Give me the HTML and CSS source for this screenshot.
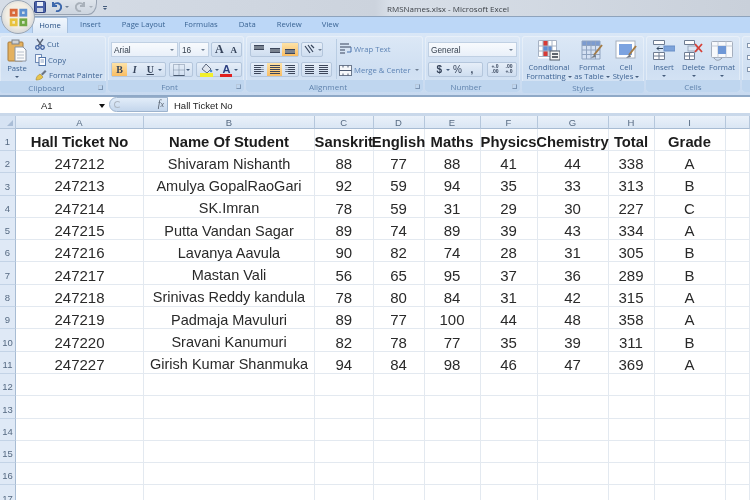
FILE: index.html
```html
<!DOCTYPE html>
<html lang="en">
<head>
<meta charset="utf-8">
<title>RMSNames.xlsx - Microsoft Excel</title>
<link rel="stylesheet" href="styles.css">
</head>
<body>
<div class="office">
  <svg width="21" height="21" viewBox="0 0 24 24"><rect x="2" y="2" width="9" height="9" fill="#d9683a"/><rect x="13" y="2" width="9" height="9" fill="#5d8fd0"/><rect x="2" y="13" width="9" height="9" fill="#e8c23d"/><rect x="13" y="13" width="9" height="9" fill="#6fa844"/><path d="M5 5h3v3H5zM16 16h3v3h-3zM5 16h3v3H5zM16 5h3v3h-3z" fill="#f4f4ee" opacity=".75"/></svg>
</div>
<header class="title">
  <div class="qat">
    <svg width="12" height="12" viewBox="0 0 12 12"><rect x=".5" y=".5" width="11" height="11" rx="1" fill="#4a62a8" stroke="#2c3f80"/><rect x="3" y="1" width="6" height="4" fill="#e9eef8"/><rect x="3" y="7" width="6" height="4" fill="#c9d2e4"/></svg>
    <svg class="undo" width="11" height="11" viewBox="0 0 11 11"><path d="M2 1v4h4M2.300 5A4 4 0 1 1 5 10" fill="none" stroke="#3d68ac" stroke-width="2"/></svg>
    <i class="caret"></i>
    <svg class="redo" width="11" height="11" viewBox="0 0 11 11"><path d="M9 1v4H5M8.700 5A4 4 0 1 0 6 10" fill="none" stroke="#a9b1ba" stroke-width="2"/></svg>
    <i class="caret muted"></i>
  </div>
  <span class="more"><b></b><i class="caret dark"></i></span>
  <span class="doc">RMSNames.xlsx - Microsoft Excel</span>
</header>
<nav class="tabs">
  <span class="tab active">Home</span><span class="tab t1">Insert</span><span class="tab t2">Page Layout</span><span class="tab t3">Formulas</span><span class="tab t4">Data</span><span class="tab t5">Review</span><span class="tab t6">View</span>
</nav>
<section class="ribbon">
  <div class="group g-clip">
    <div class="body">
      <div class="big paste">
        <svg width="20" height="23" viewBox="0 0 20 23"><rect x="1" y="3" width="15" height="19" rx="1" fill="#e4b15f" stroke="#a97c3c"/><rect x="5" y="1" width="7" height="4" fill="#cfd2d6" stroke="#7d8288"/><path d="M8 8h8l3 3v11H8z" fill="#fbfbfb" stroke="#8a94a3"/><path d="M10 13h7M10 16h7M10 19h7" stroke="#b7c0cc"/></svg>
        <span>Paste</span><i class="caret dark"></i>
      </div>
      <div class="stack">
        <div class="line"><svg width="10" height="12" viewBox="0 0 10 12"><path d="M2 1l5 7M8 1L3 8" stroke="#5a6478" stroke-width="1.300" fill="none"/><circle cx="2.500" cy="9.500" r="1.800" fill="none" stroke="#3f5f9e" stroke-width="1.300"/><circle cx="7.500" cy="9.500" r="1.800" fill="none" stroke="#3f5f9e" stroke-width="1.300"/></svg><span>Cut</span></div>
        <div class="line"><svg width="11" height="12" viewBox="0 0 11 12"><rect x=".5" y=".5" width="6" height="8" fill="#f7f9fc" stroke="#6f8bb5"/><rect x="4" y="3.500" width="6.500" height="8" fill="#fff" stroke="#4f73a8"/><path d="M5.500 6h3.500M5.500 8h3.500" stroke="#8ea5c6"/></svg><span>Copy</span></div>
        <div class="line"><svg width="12" height="12" viewBox="0 0 12 12"><path d="M1 11c0-3 2-5 4-6l3 3c-1 2-4 3-7 3z" fill="#e8c44c" stroke="#a98a2c" stroke-width=".6"/><path d="M6 5l4-4 1.500 1.500-4 4z" fill="#6a7484"/></svg><span>Format Painter</span></div>
      </div>
    </div>
    <div class="label has">Clipboard<i class="launch"></i></div>
  </div>

  <div class="group g-font">
    <div class="body rows">
      <div class="ctl-row">
        <span class="select s-font">Arial<i class="caret"></i></span>
        <span class="select s-size">16<i class="caret"></i></span>
        <span class="btns fs"><b class="grow">A</b><b class="shrink">A</b></span>
      </div>
      <div class="ctl-row">
        <span class="btns biu"><b class="on bold">B</b><b class="ital">I</b><b class="under">U</b><i class="caret dark"></i></span>
        <span class="btns bord"><svg width="12" height="12" viewBox="0 0 12 12"><path d="M.5.5h11v11H.5zM6 .5v11M.5 6h11" fill="none" stroke="#7a8aa0" stroke-dasharray="1 1"/><path d="M.5 11.500h11" stroke="#4a5a70"/></svg><i class="caret dark"></i></span>
        <span class="btns color"><svg width="13" height="14" viewBox="0 0 13 14"><path d="M6 1l5 5-4 4-5-4z" fill="#dfe5ee" stroke="#5e6a80"/><circle cx="11" cy="8" r="1.300" fill="#4d8ac9"/><rect y="10" width="13" height="4" fill="#f1ef2c"/></svg><i class="caret dark"></i><span class="tcolor">A</span><i class="caret dark"></i></span>
      </div>
    </div>
    <div class="label has">Font<i class="launch"></i></div>
  </div>

  <div class="group g-align">
    <div class="body">
      <div class="rows a-left">
        <div class="ctl-row">
          <span class="btns w48"><b><i class="bars top"></i></b><b><i class="bars mid"></i></b><b class="on"><i class="bars bot"></i></b></span>
          <span class="btns w23"><svg width="14" height="11" viewBox="0 0 14 11"><path d="M1 2l5 7M4 1l5 7M7 1l3 3" stroke="#35435a" stroke-width="1.200" fill="none"/></svg><i class="caret"></i></span>
        </div>
        <div class="ctl-row">
          <span class="btns w48"><b><i class="lines left"></i></b><b class="on"><i class="lines center"></i></b><b><i class="lines right"></i></b></span>
          <span class="btns w32"><b><i class="lines center indent"></i></b><b><i class="lines center indent"></i></b></span>
        </div>
      </div>
      <div class="stack wide">
        <div class="line tall"><svg width="13" height="12" viewBox="0 0 13 12"><path d="M1 1h9M1 4h11M1 7h5M1 10h5" stroke="#6d7a8e" stroke-width="1.500"/><path d="M12 4v5H8" fill="none" stroke="#4a73ad"/></svg><span>Wrap Text</span></div>
        <div class="line tall"><svg width="13" height="11" viewBox="0 0 13 11"><rect x=".5" y=".5" width="12" height="10" fill="#f5f7fa" stroke="#6d7a8e"/><path d="M.5 5.500h12M4 .5v2M9 .5v2M4 8.500v2M9 8.500v2" stroke="#4c5a72"/></svg><span>Merge &amp; Center</span><i class="caret"></i></div>
      </div>
    </div>
    <div class="label has">Alignment<i class="launch"></i></div>
  </div>

  <div class="group g-num">
    <div class="body rows">
      <div class="ctl-row"><span class="select s-num">General<i class="caret"></i></span></div>
      <div class="ctl-row">
        <span class="btns w55"><b class="sym">$</b><i class="caret dark"></i><b class="sym pct">%</b><b class="sym">,</b></span>
        <span class="btns w30"><b class="dec">+.0<br>.00</b><b class="dec">.00<br>+.0</b></span>
      </div>
    </div>
    <div class="label has">Number<i class="launch"></i></div>
  </div>

  <div class="group g-style">
    <div class="body icons">
      <div class="big w-cond">
        <svg width="22" height="21" viewBox="0 0 22 21"><path d="M0 .5h19v18H0z" fill="#fff"/><rect y="0" width="6" height="6" fill="#f4f7fb"/><rect x="5" y="1" width="5" height="5" fill="#d83a35"/><rect x="5" y="6" width="9" height="5" fill="#5f8ed4"/><rect x="5" y="11" width="5" height="5" fill="#d83a35"/><path d="M.5.500h18v16H.5zM.5 6h18M.5 11h18M5 .5v16M10 .5v16M14 .5v16" fill="none" stroke="#a6b2c4"/><rect x="12" y="11" width="10" height="9" fill="#f4f4f4" stroke="#4f5a6b"/><path d="M14 14h6M14 17h6" stroke="#2d3440" stroke-width="1.500"/></svg>
        <span>Conditional</span><span>Formatting <i class="caret dark"></i></span>
      </div>
      <div class="big w-fmt">
        <svg width="22" height="21" viewBox="0 0 22 21"><rect x="1" y="1" width="18" height="18" fill="#d5e1f3"/><rect x="1" y="1" width="18" height="4" fill="#7c9bd0"/><path d="M1 1h18v18H1zM1 5.500h18M1 10h18M1 14.500h18M5.500 1v18M10 1v18M14.500 1v18" fill="none" stroke="#8fa3c0"/><path d="M21 5L13 15" stroke="#a47b45" stroke-width="2"/><path d="M14 14l-4 4 5-1z" fill="#737b85"/></svg>
        <span>Format</span><span>as Table <i class="caret dark"></i></span>
      </div>
      <div class="big w-cell">
        <svg width="22" height="21" viewBox="0 0 22 21"><rect x="1" y="1" width="19" height="17" fill="#fff" stroke="#a5afbe"/><rect x="4" y="4" width="13" height="11" fill="#7ca3e0"/><path d="M21 6l-7 9" stroke="#a47b45" stroke-width="2"/><path d="M15 14l-4 4 5-1z" fill="#737b85"/></svg>
        <span>Cell</span><span>Styles <i class="caret dark"></i></span>
      </div>
    </div>
    <div class="label">Styles</div>
  </div>

  <div class="group g-cell">
    <div class="body icons">
      <div class="big w-ins">
        <svg width="22" height="21" viewBox="0 0 22 21"><path d="M.5.500h11v4H.5zM.5 12.500h11v7H.5zM6 12.500v7M.5 16h11" fill="#fdfdfe" stroke="#6e7c92"/><rect x="11" y="6" width="11" height="5" fill="#7da3da" stroke="#6a8fc7"/><path d="M10 8.500H4M6 6.500l-2 2 2 2" fill="none" stroke="#33475f"/></svg>
        <span>Insert</span><i class="caret dark"></i>
      </div>
      <div class="big w-del">
        <svg width="20" height="21" viewBox="0 0 20 21"><path d="M.5.500h10v4H.5zM.5 12.500h10v7H.5zM5.500 12.500v7M.5 16h10" fill="#fdfdfe" stroke="#6e7c92"/><rect x="4" y="6" width="9" height="5" fill="#dce6f4" stroke="#9aa9bd"/><path d="M11 4l7 8M18 4l-7 8" stroke="#d63f36" stroke-width="1.800"/></svg>
        <span>Delete</span><i class="caret dark"></i>
      </div>
      <div class="big w-for">
        <svg width="22" height="21" viewBox="0 0 22 21"><rect x=".5" y="1.500" width="21" height="16" rx="1" fill="#f7f9fc" stroke="#a4aebd"/><path d="M7 1.500v16M15 1.500v16M.5 6h21" stroke="#c3cbd6"/><rect x="7" y="6" width="8" height="8" fill="#6e97d6"/><path d="M3 18c2 3 5 3 8 0" fill="none" stroke="#8d98a8"/></svg>
        <span>Format</span><i class="caret dark"></i>
      </div>
    </div>
    <div class="label">Cells</div>
  </div>

  <div class="group g-edit">
    <div class="body edit-marks"><i></i><i></i><i></i></div>
    <div class="label"></div>
  </div>
</section>
<div class="fbar">
  <div class="namebox">A1<i class="caret black"></i></div>
  <div class="pill"><i class="knob"></i><em>f<small>x</small></em></div>
  <div class="formula">Hall Ticket No</div>
</div>
<main class="sheet">
  <div class="corner"><i></i></div><div class="ch">A</div><div class="ch">B</div><div class="ch">C</div><div class="ch">D</div><div class="ch">E</div><div class="ch">F</div><div class="ch">G</div><div class="ch">H</div><div class="ch">I</div><div class="ch"></div>
  <div class="rh">1</div><div class="c b">Hall Ticket No</div><div class="c b">Name Of Student</div><div class="c b">Sanskrit</div><div class="c b">English</div><div class="c b">Maths</div><div class="c b">Physics</div><div class="c b">Chemistry</div><div class="c b">Total</div><div class="c b">Grade</div><div class="c"></div>
  <div class="rh">2</div><div class="c">247212</div><div class="c n">Shivaram Nishanth</div><div class="c">88</div><div class="c">77</div><div class="c">88</div><div class="c">41</div><div class="c">44</div><div class="c">338</div><div class="c">A</div><div class="c"></div>
  <div class="rh">3</div><div class="c">247213</div><div class="c n">Amulya GopalRaoGari</div><div class="c">92</div><div class="c">59</div><div class="c">94</div><div class="c">35</div><div class="c">33</div><div class="c">313</div><div class="c">B</div><div class="c"></div>
  <div class="rh">4</div><div class="c">247214</div><div class="c n">SK.Imran</div><div class="c">78</div><div class="c">59</div><div class="c">31</div><div class="c">29</div><div class="c">30</div><div class="c">227</div><div class="c">C</div><div class="c"></div>
  <div class="rh">5</div><div class="c">247215</div><div class="c n">Putta Vandan Sagar</div><div class="c">89</div><div class="c">74</div><div class="c">89</div><div class="c">39</div><div class="c">43</div><div class="c">334</div><div class="c">A</div><div class="c"></div>
  <div class="rh">6</div><div class="c">247216</div><div class="c n">Lavanya Aavula</div><div class="c">90</div><div class="c">82</div><div class="c">74</div><div class="c">28</div><div class="c">31</div><div class="c">305</div><div class="c">B</div><div class="c"></div>
  <div class="rh">7</div><div class="c">247217</div><div class="c n">Mastan Vali</div><div class="c">56</div><div class="c">65</div><div class="c">95</div><div class="c">37</div><div class="c">36</div><div class="c">289</div><div class="c">B</div><div class="c"></div>
  <div class="rh">8</div><div class="c">247218</div><div class="c n">Srinivas Reddy kandula</div><div class="c">78</div><div class="c">80</div><div class="c">84</div><div class="c">31</div><div class="c">42</div><div class="c">315</div><div class="c">A</div><div class="c"></div>
  <div class="rh">9</div><div class="c">247219</div><div class="c n">Padmaja Mavuluri</div><div class="c">89</div><div class="c">77</div><div class="c">100</div><div class="c">44</div><div class="c">48</div><div class="c">358</div><div class="c">A</div><div class="c"></div>
  <div class="rh">10</div><div class="c">247220</div><div class="c n">Sravani Kanumuri</div><div class="c">82</div><div class="c">78</div><div class="c">77</div><div class="c">35</div><div class="c">39</div><div class="c">311</div><div class="c">B</div><div class="c"></div>
  <div class="rh">11</div><div class="c">247227</div><div class="c n">Girish Kumar Shanmuka</div><div class="c">94</div><div class="c">84</div><div class="c">98</div><div class="c">46</div><div class="c">47</div><div class="c">369</div><div class="c">A</div><div class="c"></div>
  <div class="rh">12</div><div class="c"></div><div class="c"></div><div class="c"></div><div class="c"></div><div class="c"></div><div class="c"></div><div class="c"></div><div class="c"></div><div class="c"></div><div class="c"></div>
  <div class="rh">13</div><div class="c"></div><div class="c"></div><div class="c"></div><div class="c"></div><div class="c"></div><div class="c"></div><div class="c"></div><div class="c"></div><div class="c"></div><div class="c"></div>
  <div class="rh">14</div><div class="c"></div><div class="c"></div><div class="c"></div><div class="c"></div><div class="c"></div><div class="c"></div><div class="c"></div><div class="c"></div><div class="c"></div><div class="c"></div>
  <div class="rh">15</div><div class="c"></div><div class="c"></div><div class="c"></div><div class="c"></div><div class="c"></div><div class="c"></div><div class="c"></div><div class="c"></div><div class="c"></div><div class="c"></div>
  <div class="rh">16</div><div class="c"></div><div class="c"></div><div class="c"></div><div class="c"></div><div class="c"></div><div class="c"></div><div class="c"></div><div class="c"></div><div class="c"></div><div class="c"></div>
  <div class="rh">17</div><div class="c"></div><div class="c"></div><div class="c"></div><div class="c"></div><div class="c"></div><div class="c"></div><div class="c"></div><div class="c"></div><div class="c"></div><div class="c"></div>
</main>
</body>
</html>
```
FILE: styles.css
```css
* { box-sizing: border-box; }
html, body { margin: 0; height: 500px; overflow: hidden; background: #fff; }
body { width: 750px; position: relative; font-family: "Open Sans", "Noto Sans", sans-serif; font-size: 7.700px; color: #2f5688; filter: blur(.3px); }
i { font-style: normal; display: block; }
svg { display: block; flex: none; }

.caret { width: 0; height: 0; border: 2px solid transparent; border-top: 2.500px solid #6f7f93; border-bottom: 0; display: inline-block; flex: none; vertical-align: middle; }
.caret.dark { border-top-color: #445c7c; }
.caret.muted { border-top-color: #a8b0ba; }
.caret.black { border: 3px solid transparent; border-top: 4px solid #111; border-bottom: 0; }

.office { position: absolute; left: 1px; top: 0; width: 34px; height: 34px; border-radius: 50%; z-index: 3; display: flex; align-items: center; justify-content: center; background: radial-gradient(circle at 50% 45%, #f3eee4 0 48%, #d6d8da 74%, #aab4bf 100%); border: 1px solid #9ba6b4; }

.title { height: 17px; display: flex; align-items: center; background: linear-gradient(90deg, #d6dde7 0, #ccd3dd 50%, #d8dfe8 52%, #c9d0da 100%); border-bottom: 1px solid #8ea3bc; padding-left: 30px; }
.qat { width: 67px; height: 16px; margin-top: -2px; padding-left: 4px; display: flex; align-items: center; gap: 3px; background: linear-gradient(#dfe5ec, #cdd5df); border: 1px solid #98a3b2; border-top: 0; border-left: 0; border-radius: 0 0 9px 0 / 0 0 12px 0; }
.qat .undo { margin-left: 2px; }
.qat .redo { margin-left: 3px; }
.more { margin-left: 5px; width: 5px; display: flex; flex-direction: column; align-items: center; gap: 1px; }
.more b { width: 4px; height: 1px; background: #445c7c; }
.doc { margin-left: 280px; font-size: 8px; color: #3d4248; white-space: nowrap; }

.tabs { height: 16px; display: flex; background: #bcd7f7; padding-left: 32px; align-items: flex-end; }
.tab { height: 16px; line-height: 15px; color: #3a6494; white-space: nowrap; }
.tab.active { width: 36px; text-align: center; background: linear-gradient(#f0f6fd, #dbe8f7); border: 1px solid #a6c0de; border-bottom: 0; border-radius: 2px 2px 0 0; color: #264f83; }
.t1 { margin-left: 12px; }
.t2 { margin-left: 21px; }
.t3 { margin-left: 19px; }
.t4 { margin-left: 21px; }
.t5 { margin-left: 21px; }
.t6 { margin-left: 20px; }

.ribbon { height: 64px; display: flex; gap: 2px; padding: 3px 0; background: linear-gradient(#d9e7f7, #c8daf0); border-bottom: 2px solid #8fa9c7; }
.group { flex: none; display: flex; flex-direction: column; border-radius: 3px; background: linear-gradient(#dce8f6, #cfdff2 60%, #d7e5f5); box-shadow: 0 0 0 1px rgba(255,255,255,.35) inset; }
.body { height: 46px; display: flex; }
.label { height: 12px; line-height: 14px; position: relative; text-align: center; background: #bfd6ef; color: #6083ad; font-size: 8px; border-radius: 0 0 3px 3px; }
.label.has { padding-right: 13px; }
.launch { position: absolute; right: 3px; top: 4px; width: 5px; height: 5px; border: 1px solid #7c95b3; border-left-color: #b7c8dc; border-top-color: #b7c8dc; }

.g-clip { width: 106px; }
.g-font { width: 136px; }
.g-align { width: 177px; }
.g-num { width: 95px; }
.g-style { width: 122px; }
.g-cell { width: 94px; }
.g-edit { width: 12px; }

.big { display: flex; flex-direction: column; align-items: center; line-height: 9px; white-space: nowrap; padding-top: 4px; color: #3f6494; }
.big svg { margin-bottom: 2px; }
.big > .caret { margin-top: 3px; }
.paste { width: 34px; padding-top: 3px; }
.paste svg { margin-bottom: 0; }
.paste > span { margin-top: 2px; }

.stack { display: flex; flex-direction: column; gap: 3.500px; padding: 2px 0 0 1px; }
.line { height: 12px; display: flex; align-items: center; gap: 2px; white-space: nowrap; color: #3f6494; }
.stack.wide { gap: 9px; padding: 4px 0 0 2px; margin-left: 4px; border-left: 1px solid #b9cde3; height: 40px; margin-top: 3px; }
.stack.wide .line { color: #5d83b4; }
.line.tall { gap: 2px; }
.line.tall .caret { margin-left: 2px; }

.rows { flex-direction: column; gap: 5px; padding: 6px 0 0 3px; }
.a-left { display: flex; padding-left: 4px; }
.ctl-row { height: 15px; display: flex; gap: 2px; flex: none; }
.select { height: 15px; background: linear-gradient(#f8fafd, #e9f0f9); border: 1px solid #c0d0e3; display: flex; align-items: center; justify-content: space-between; padding: 0 3px 0 2px; font-family: "Liberation Sans", Arial, sans-serif; color: #35404e; font-size: 8.300px; }
.s-font { width: 67px; margin-right: -1px; }
.s-size { width: 30px; }
.s-num { width: 89px; }

.btns { height: 15px; display: flex; align-items: center; justify-content: space-around; border: 1px solid #b4c6dc; border-radius: 2px; background: linear-gradient(#e6eef8, #cfdef0); color: #35435a; }
.btns b { flex: 1; height: 13px; display: flex; align-items: center; justify-content: center; font-weight: 700; font-family: "Liberation Serif", serif; font-size: 10px; }
.btns b.on { background: linear-gradient(#fde3a8, #f9bd63); }
.fs { width: 31px; }
.grow { font-size: 12px !important; }
.shrink { font-size: 9px !important; }
.biu { width: 55px; padding-right: 3px; }
.biu .on { flex: none; width: 15px; }
.ital { font-style: italic; }
.under { text-decoration: underline; }
.bord { width: 24px; margin-left: 1px; padding: 0 2px; }
.color { width: 46px; margin-left: 1px; padding: 0 2px; }
.tcolor { font-family: "Liberation Sans", sans-serif; font-weight: 700; font-size: 11px; line-height: 10px; color: #2c3f80; border-bottom: 3px solid #e02020; width: 12px; text-align: center; margin-top: 1px; }
.w48 { width: 49px; }
.w23 { width: 22px; padding: 0 2px; }
.w32 { width: 31px; }
.w55 { width: 55px; padding: 0 3px; }
.w30 { width: 30px; margin-left: 2px; }
.sym { font-size: 10px !important; font-family: "Liberation Sans", sans-serif !important; }
.sym.pct { font-weight: 400; }
.dec { font-family: "Liberation Sans", sans-serif !important; font-size: 5px !important; line-height: 5px; text-align: center; display: block !important; padding-top: 1px; }

.bars { width: 10px; height: 9px; position: relative; }
.bars::before { content: ""; position: absolute; left: 0; right: 0; height: 3px; border-top: 1px solid #3c465a; border-bottom: 1px solid #3c465a; background: #79828f; }
.bars.top::before { top: 0; }
.bars.mid::before { top: 3px; }
.bars.bot::before { bottom: 0; }
.lines { width: 10px; height: 9px; background: repeating-linear-gradient(#3c465a 0 1px, transparent 1px 2px); }
.lines.left { clip-path: polygon(0 0, 100% 0, 100% 25%, 70% 25%, 70% 50%, 100% 50%, 100% 75%, 70% 75%, 70% 100%, 0 100%); }
.lines.right { clip-path: polygon(0 0, 100% 0, 100% 100%, 30% 100%, 30% 75%, 0 75%, 0 50%, 30% 50%, 30% 25%, 0 25%); }
.lines.indent { width: 9px; }

.w-cond { width: 50px; margin-left: 2px; }
.w-fmt { width: 36px; }
.w-cell { width: 32px; }
.w-ins { width: 33px; margin-left: 1px; }
.w-del { width: 27px; }
.w-for { width: 30px; }
.edit-marks { flex-direction: column; gap: 7px; padding: 7px 0 0 5px; }
.edit-marks i { width: 6px; height: 5px; background: #fafbfd; border: 1px solid #8395ad; }

.fbar { height: 16px; display: flex; background: #fff; font-family: "Liberation Sans", sans-serif; color: #222; font-size: 9.500px; line-height: 16px; }
.namebox { width: 109px; display: flex; justify-content: space-between; align-items: center; padding: 1px 4px 0 41px; }
.pill { width: 59px; height: 15px; display: flex; align-items: center; justify-content: space-between; padding: 0 3px 0 4px; border: 1px solid #9db3cd; border-radius: 8px 0 0 8px; background: linear-gradient(#e2edf9, #c4d6ec); }
.knob { width: 7px; height: 7px; border-radius: 50%; border: 1px solid #aeb8c4; border-right-color: transparent; }
.pill em { font-family: "Liberation Serif", serif; color: #56616e; font-size: 10px; }
.pill small { font-size: 8px; }
.formula { padding: 1px 0 0 6px; }

.sheet { display: grid; margin-top: 3px; grid-template-columns: 16px 128px 171px 58.500px 51px 56px 57px 71px 46px 71px 24.500px; grid-template-rows: 13px 22px repeat(16, 22.300px); font-family: "Liberation Sans", Arial, sans-serif; box-shadow: 0 -3px 0 #c9d8ea; }
.corner { background: #d6e3f3; border-right: 1px solid #b5c7dc; border-bottom: 1px solid #b5c7dc; position: relative; }
.corner i { position: absolute; right: 2px; bottom: 2px; border: 3px solid transparent; border-right-color: #a9bdd6; border-bottom-color: #a9bdd6; }
.ch { display: flex; align-items: center; justify-content: center; font-size: 9.500px; color: #566a82; background: linear-gradient(#eaf1fa, #dae6f4); border-right: 1px solid #b5c7dc; border-bottom: 1px solid #a8bcd3; }
.rh { display: flex; align-items: flex-end; justify-content: center; padding-bottom: 3px; font-size: 9.500px; color: #566a82; background: #dfe9f6; border-right: 1px solid #a8bcd3; border-bottom: 1px solid #c3d3e6; }
.c { display: flex; align-items: center; justify-content: center; padding-top: 4px; white-space: nowrap; font-size: 15px; color: #2a2a2a; border-right: 1px solid #e3e9f0; border-bottom: 1px solid #e3e9f0; }
.c.n { font-size: 14.500px; }
.c.b { font-weight: 700; font-size: 14.800px; padding-top: 4px; color: #1c1c1c; }
```
